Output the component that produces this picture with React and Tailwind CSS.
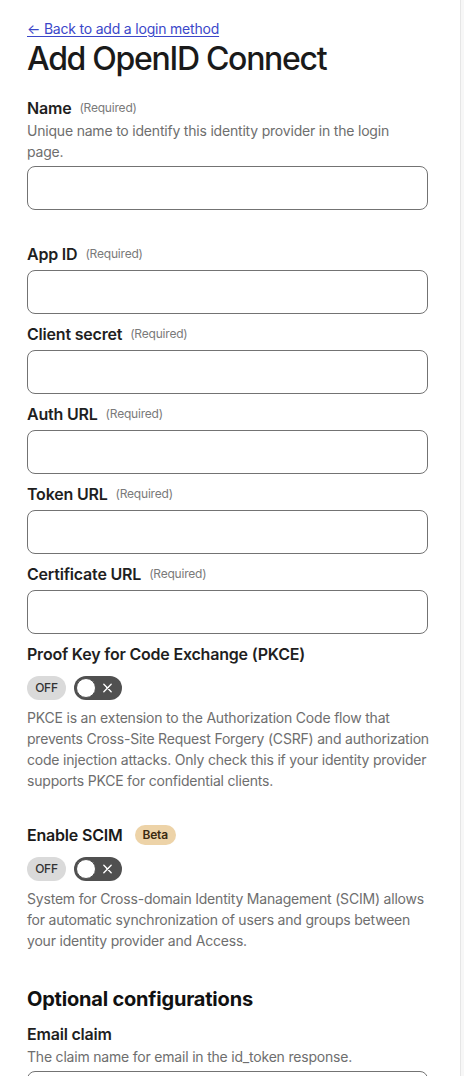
import React from 'react';

const Required = () => (
  <span className="ml-2 text-[12px] font-normal text-[#7a7a7a]">(Required)</span>
);

const TextInput = () => (
  <input
    type="text"
    className="mt-1 block h-[44px] w-full rounded-[8px] border border-[#737373] bg-white px-3 text-[14px] outline-none"
  />
);

const Field = ({ label, required = true, description, className = '' }) => (
  <div className={className}>
    <label className="flex h-6 items-center text-[16px] font-semibold text-[#1f1f1f]">
      {label}
      {required && <Required />}
    </label>
    {description && (
      <p className="text-[14px] leading-[21px] text-[#6e6e6e]">{description}</p>
    )}
    <TextInput />
  </div>
);

const OffToggle = () => (
  <div className="mt-[10px] flex items-center gap-2">
    <span className="flex h-6 w-[39px] items-center justify-center rounded-full bg-[#dadada] text-[12px] font-medium text-[#333]">
      OFF
    </span>
    <button
      type="button"
      className="relative flex h-6 w-12 items-center rounded-full bg-[#505050] pl-[2px]"
    >
      <span className="h-[20px] w-[20px] rounded-full border border-[#505050] bg-white" />
      <svg
        className="absolute right-[9px] top-1/2 -translate-y-1/2"
        width="11"
        height="11"
        viewBox="0 0 12 12"
        fill="none"
        stroke="white"
        strokeWidth="1.5"
        strokeLinecap="round"
      >
        <path d="M2 2l8 8M10 2l-8 8" />
      </svg>
    </button>
  </div>
);

const App = () => {
  return (
    <div
      className="flex min-h-screen bg-[#f7f7f7] tracking-[-0.2px]"
      style={{ fontFamily: 'Inter, "Noto Sans", sans-serif' }}
    >
      <div className="w-[461px] shrink-0 border-r border-[#e6e6e6] bg-white pb-10 pl-[27px] pr-[32px] pt-[19px]">
        <a href="#" className="block text-[14px] leading-5 text-[#3b47c9] underline underline-offset-2">
          ← Back to add a login method
        </a>
        <h1 className="text-[32px] font-medium leading-[40px] tracking-[-1.3px] text-[#1a1a1a]">
          Add OpenID Connect
        </h1>

        <Field
          className="mt-[17px]"
          label="Name"
          description="Unique name to identify this identity provider in the login page."
        />
        <Field className="mt-8" label="App ID" />
        <Field className="mt-2" label="Client secret" />
        <Field className="mt-2" label="Auth URL" />
        <Field className="mt-2" label="Token URL" />
        <Field className="mt-2" label="Certificate URL" />

        <div className="mt-2">
          <div className="flex h-6 items-center text-[16px] font-semibold text-[#1f1f1f]">
            Proof Key for Code Exchange (PKCE)
          </div>
          <OffToggle />
          <p className="-mr-5 mt-[7px] text-[14px] leading-[21px] text-[#6e6e6e]">
            PKCE is an extension to the Authorization Code flow that prevents Cross-Site Request Forgery (CSRF) and authorization code injection attacks. Only check this if your identity provider supports PKCE for confidential clients.
          </p>
        </div>

        <div className="mt-8">
          <div className="flex h-6 items-center text-[16px] font-semibold text-[#1a1a1a]">
            Enable SCIM
            <span className="ml-3 flex h-5 items-center rounded-full bg-[#edd3a8] px-2 text-[12px] font-semibold text-[#3a2a12]">
              Beta
            </span>
          </div>
          <OffToggle />
          <p className="mt-[7px] text-[14px] leading-[21px] text-[#6e6e6e]">
            System for Cross-domain Identity Management (SCIM) allows for automatic synchronization of users and groups between your identity provider and Access.
          </p>
        </div>

        <h2 className="mt-[34px] text-[20px] font-bold leading-7 text-[#111]">
          Optional configurations
        </h2>

        <Field
          className="mt-[9px]"
          label="Email claim"
          required={false}
          description="The claim name for email in the id_token response."
        />
      </div>
      <div className="flex-1" />
    </div>
  );
};

export default App;
